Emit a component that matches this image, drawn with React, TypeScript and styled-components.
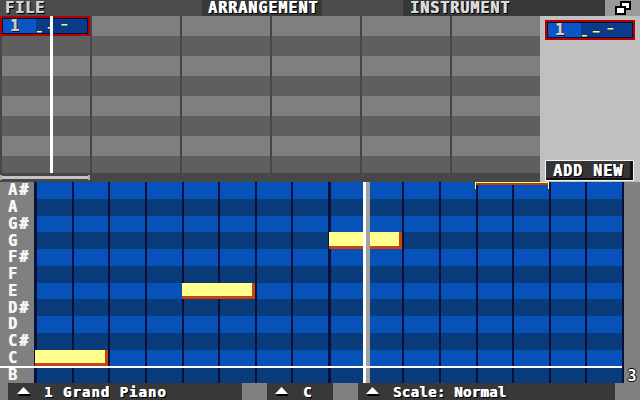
import React from "react";
import styled, { createGlobalStyle } from "styled-components";

const GlobalStyle = createGlobalStyle`
  html, body { margin: 0; padding: 0; background: #000; }
  body { overflow: hidden; }
  * { box-sizing: border-box; }
`;

const PIXEL = `"DejaVu Sans Mono", "Liberation Mono", monospace`;

const heavy = (color: string, shadow = "#000") =>
  `text-shadow: 0.6px 0 0 ${color}, 1px 1px 0 ${shadow}, 1.6px 1px 0 ${shadow};`;

const KEYS = ["A#", "A", "G#", "G", "F#", "F", "E", "D#", "D", "C#", "C", "B"];
const NOTES = [
  { row: 10, col: 0, len: 2 },
  { row: 6, col: 4, len: 2 },
  { row: 3, col: 8, len: 2 },
];
const ROLL_W = 588;
const ROLL_H = 201;
const COL_W = ROLL_W / 16;
const ROW_H = ROLL_H / 12;

const Screen = styled.div`
  width: 640px;
  height: 400px;
  display: flex;
  flex-direction: column;
  overflow: hidden;
  font-family: ${PIXEL};
  font-weight: bold;
`;

/* ---------- top bar ---------- */
const TopBar = styled.div`
  height: 16px;
  flex: none;
  display: flex;
`;

const BarSection = styled.div<{ $w: number; $bg: string; $color?: string; $pad?: number }>`
  width: ${(p) => p.$w}px;
  background: ${(p) => p.$bg};
  color: ${(p) => p.$color ?? "#d2d2d2"};
  padding-left: ${(p) => p.$pad ?? 0}px;
  display: flex;
  align-items: center;
  font-size: 15px;
  line-height: 16px;
  letter-spacing: 1px;
  ${(p) => heavy(p.$color ?? "#d2d2d2")}
  white-space: nowrap;
`;

const WindowButton = styled.div`
  width: 35px;
  background: #9a9a9a;
  display: flex;
  align-items: center;
  padding-left: 10px;
`;

/* ---------- arrangement ---------- */
const Arrangement = styled.div`
  height: 166px;
  flex: none;
  display: flex;
`;

const TrackArea = styled.div`
  width: 540px;
  position: relative;
  display: flex;
  flex-direction: column;
  background: #474747;
`;

const LaneGrid = styled.div`
  display: grid;
  grid-template-columns: repeat(6, 90px);
  grid-template-rows: repeat(7, 20px) 17px;
`;

const LaneCell = styled.div<{ $light: boolean }>`
  background: ${(p) => (p.$light ? "#7f7f7f" : "#5f5f5f")};
  border-left: 2px solid #464646;
`;

const ChipSlot = styled.div`
  grid-row: 1;
  grid-column: 1;
  z-index: 1;
`;

const ChipFrame = styled.div`
  width: 90px;
  height: 20px;
  border: 2px solid #b60000;
  background: #0a3a8a;
  box-shadow: inset 0 0 0 1px #02103a;
  display: flex;
  padding: 1px;
`;

const ChipNumber = styled.div`
  width: 33px;
  background: #0a56c4;
  color: #cdcdcd;
  font-size: 15px;
  line-height: 14px;
  padding-left: 7px;
  display: flex;
  align-items: center;
  ${heavy("#cdcdcd", "#1a1a1a")}
`;

const ChipMini = styled.svg`
  flex: 1;
  height: 14px;
  display: block;
`;

const ScrollStrip = styled.div`
  height: 9px;
  flex: none;
  background: #474747;
  padding-top: 2px;
`;

const ScrollThumb = styled.div`
  width: 90px;
  height: 5px;
  position: relative;
  &::before {
    content: "";
    position: absolute;
    left: 0;
    right: 0;
    top: 1px;
    height: 3px;
    background: #c4c4c4;
  }
  &::after {
    content: "";
    position: absolute;
    left: 0;
    right: 0;
    top: 0;
    height: 5px;
    border-left: 2px solid #b0b0b0;
    border-right: 2px solid #b0b0b0;
  }
`;

const ArrangePlayhead = styled.div`
  position: absolute;
  left: 50px;
  top: 0;
  width: 3px;
  height: 157px;
  background: #ffffff;
  z-index: 2;
`;

const SidePanel = styled.div`
  width: 100px;
  background: #c0c0c0;
  display: flex;
  flex-direction: column;
  justify-content: space-between;
  padding: 4px 5px 1px 5px;
`;

const AddNewButton = styled.div`
  width: 89px;
  height: 21px;
  border: 1px solid #f2f2f2;
  background: #353535;
  box-shadow: inset -3px -2px 0 #111;
  color: #fff;
  font-size: 15px;
  letter-spacing: 1px;
  display: flex;
  align-items: center;
  justify-content: center;
  padding-right: 3px;
  ${heavy("#fff")}
`;

/* ---------- piano roll ---------- */
const PianoSection = styled.div`
  height: ${ROLL_H}px;
  flex: none;
  display: flex;
  position: relative;
`;

const KeyColumn = styled.div`
  width: 34px;
  background: #808080;
  display: grid;
  grid-template-rows: repeat(12, 1fr);
`;

const KeyLabel = styled.div`
  padding-left: 8px;
  padding-top: 1px;
  color: #f6f6f6;
  font-size: 15px;
  line-height: 1;
  letter-spacing: 2px;
  display: flex;
  align-items: center;
  text-shadow: 0.6px 0 0 #f6f6f6;
`;

const Roll = styled.div`
  width: ${ROLL_W}px;
  position: relative;
  display: flex;
  flex-direction: column;
`;

const RollRow = styled.div<{ $light: boolean }>`
  flex: 1;
  display: flex;
  background: ${(p) => (p.$light ? "#0652b8" : "#0a3c7c")};
`;

const Beat = styled.div<{ $bar: boolean }>`
  flex: 1;
  border-left: ${(p) => (p.$bar ? 3 : 2)}px solid #08103c;
`;

const Note = styled.div`
  position: absolute;
  background: #ffff8e;
  box-shadow: inset -3px -3px 0 #c8430f;
  z-index: 1;
`;

const SelectionMark = styled.div`
  position: absolute;
  top: 0;
  height: 7px;
  border: 1px solid #ffff70;
  border-bottom: none;
  box-shadow: inset 0 2px 0 #b83a16;
  z-index: 1;
`;

const RollPlayhead = styled.div`
  position: absolute;
  top: 0;
  bottom: 0;
  left: 329px;
  width: 7px;
  border-left: 3px solid #ffffff;
  background: #a2a2a2;
  z-index: 2;
`;

const RightGutter = styled.div`
  width: 18px;
  background: #808080;
  border-left: 2px solid #08103c;
  display: flex;
  flex-direction: column;
  justify-content: flex-end;
  align-items: center;
  color: #fff;
  font-size: 15px;
  line-height: 14px;
  text-shadow: 1px 0 0 #000, -1px 0 0 #000, 0 1px 0 #000, 0 -1px 0 #000;
`;

const OctaveLine = styled.div`
  position: absolute;
  left: 0;
  top: ${11 * ROW_H}px;
  width: 622px;
  height: 2px;
  background: #ffffff;
  z-index: 3;
`;

/* ---------- bottom bar ---------- */
const BottomBar = styled.div`
  height: 17px;
  flex: none;
  display: flex;
  background: #383838;
`;

const Cap = styled.div<{ $w: number }>`
  width: ${(p) => p.$w}px;
  background: #808080;
`;

const Selector = styled.div<{ $w: number; $pad: number; $gap: number; $spacing?: number }>`
  width: ${(p) => p.$w}px;
  padding-left: ${(p) => p.$pad}px;
  gap: ${(p) => p.$gap}px;
  display: flex;
  align-items: center;
  color: #ffffff;
  font-size: 14px;
  letter-spacing: ${(p) => p.$spacing ?? 1}px;
  ${heavy("#fff")}
  white-space: nowrap;
`;

const TriangleIcon = () => (
  <svg width="14" height="9" viewBox="0 0 14 9">
    <polygon points="7,1 14,9 1,9" fill="#000" />
    <polygon points="6.5,0 13,7 0,7" fill="#ffffff" />
  </svg>
);

const RestoreIcon = () => (
  <svg width="16" height="14" viewBox="0 0 16 14">
    <rect x="6" y="1" width="9" height="7" fill="#fff" stroke="#000" strokeWidth="2" />
    <rect x="1" y="6" width="9" height="7" fill="#fff" stroke="#000" strokeWidth="2" />
  </svg>
);

const PatternChip = ({ dashes }: { dashes: [number, number, number][] }) => (
  <ChipFrame>
    <ChipNumber>1</ChipNumber>
    <ChipMini viewBox="0 0 52 14" preserveAspectRatio="none">
      {dashes.map(([x, y, w], i) => (
        <rect key={i} x={x} y={y} width={w} height={1.5} fill="#ffff70" />
      ))}
    </ChipMini>
  </ChipFrame>
);

export default function App() {
  const lanes = Array.from({ length: 8 }, (_, r) => r);
  const cols = Array.from({ length: 6 }, (_, c) => c);
  const beats = Array.from({ length: 16 }, (_, b) => b);
  return (
    <>
      <GlobalStyle />
      <Screen>
        <TopBar>
          <BarSection $w={202} $bg="#4c4c4c" $pad={5}>FILE</BarSection>
          <BarSection $w={120} $bg="#383838" $color="#ffffff" $pad={6}>ARRANGEMENT</BarSection>
          <BarSection $w={81} $bg="#4c4c4c" />
          <BarSection $w={202} $bg="#383838" $color="#dcdcdc" $pad={7}>INSTRUMENT</BarSection>
          <WindowButton>
            <RestoreIcon />
          </WindowButton>
        </TopBar>

        <Arrangement>
          <TrackArea>
            <LaneGrid>
              {lanes.map((r) =>
                cols.map((c) => (
                  <LaneCell
                    key={`${r}-${c}`}
                    $light={r % 2 === 0}
                    style={{ gridRow: r + 1, gridColumn: c + 1 }}
                  />
                ))
              )}
              <ChipSlot>
                <PatternChip dashes={[[1, 12, 5], [12, 8, 4], [26, 5, 6]]} />
              </ChipSlot>
            </LaneGrid>
            <ScrollStrip>
              <ScrollThumb />
            </ScrollStrip>
            <ArrangePlayhead />
          </TrackArea>
          <SidePanel>
            <PatternChip dashes={[[1, 12, 5], [12, 8, 7], [27, 5, 6]]} />
            <AddNewButton>ADD NEW</AddNewButton>
          </SidePanel>
        </Arrangement>

        <PianoSection>
          <KeyColumn>
            {KEYS.map((k) => (
              <KeyLabel key={k}>{k}</KeyLabel>
            ))}
          </KeyColumn>
          <Roll>
            {KEYS.map((k, r) => (
              <RollRow key={k} $light={r % 2 === 0}>
                {beats.map((b) => (
                  <Beat key={b} $bar={b % 8 === 0} />
                ))}
              </RollRow>
            ))}
            {NOTES.map((n, i) => (
              <Note
                key={i}
                style={{
                  left: n.col * COL_W + 1,
                  top: n.row * ROW_H,
                  width: n.len * COL_W - 1,
                  height: ROW_H,
                }}
              />
            ))}
            <SelectionMark style={{ left: 12 * COL_W, width: 2 * COL_W }} />
            <RollPlayhead />
          </Roll>
          <RightGutter>3</RightGutter>
          <OctaveLine />
        </PianoSection>

        <BottomBar>
          <Cap $w={8} />
          <Selector $w={234} $pad={9} $gap={13}>
            <TriangleIcon />
            <span>1 Grand Piano</span>
          </Selector>
          <Cap $w={25} />
          <Selector $w={66} $pad={8} $gap={14}>
            <TriangleIcon />
            <span>C</span>
          </Selector>
          <Cap $w={25} />
          <Selector $w={257} $pad={8} $gap={13} $spacing={0.3}>
            <TriangleIcon />
            <span>Scale: Normal</span>
          </Selector>
          <Cap $w={25} />
        </BottomBar>
      </Screen>
    </>
  );
}
